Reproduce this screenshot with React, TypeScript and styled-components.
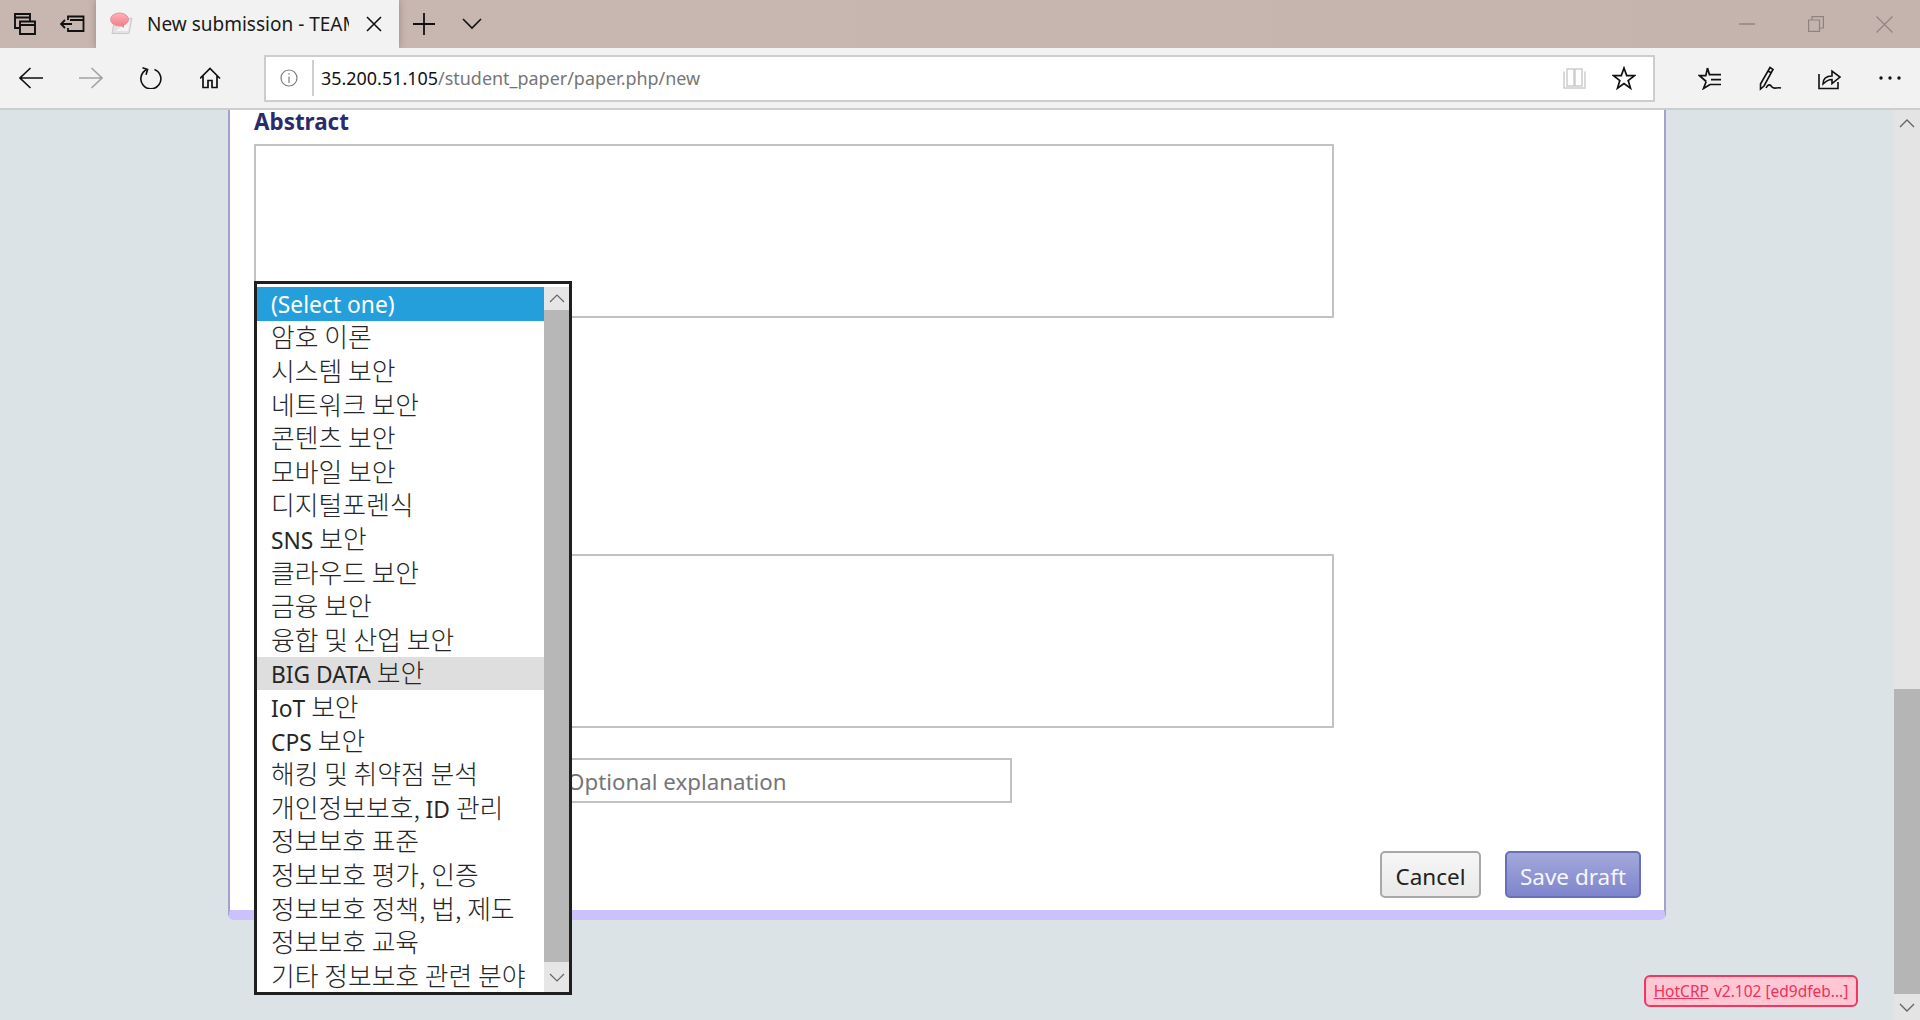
import React from "react";
import styled, { createGlobalStyle } from "styled-components";

const Global = createGlobalStyle`
  html, body { margin: 0; padding: 0; height: 1020px; overflow: hidden; }
  #root { height: 1020px; }
  * { box-sizing: border-box; }
`;
const UI = `"Noto Sans", "Noto Sans CJK KR", "Open Sans", sans-serif`;

const Shell = styled.div`display:flex;flex-direction:column;height:1020px;font-family:${UI};overflow:hidden;`;
const TitleBar = styled.div`display:flex;align-items:stretch;height:48px;background:linear-gradient(90deg,#c8b6b0,#c7b5af 50%,#c5b4ae);padding-left:1px;overflow:hidden;flex:none;`;
const TitleCell = styled.div<{ $w: number }>`width:${p => p.$w}px;display:flex;align-items:center;justify-content:center;flex:none;`;
const Tab = styled.div`width:303px;flex:none;background:#f2f2f2;display:flex;align-items:center;padding-left:14px;box-shadow:0 0 7px rgba(60,40,40,.35);position:relative;`;
const TabTitle = styled.span`width:202px;margin-left:13px;overflow:hidden;white-space:nowrap;font-size:19px;color:#1a1a1a;flex:none;`;
const TabClose = styled.div`margin-left:17px;display:flex;`;
const Spacer = styled.div`flex:1;`;
const WinControls = styled.div`display:flex;padding-right:1px;`;

const ToolBar = styled.div`display:flex;align-items:center;height:62px;background:#f2f2f2;border-bottom:2px solid #cdcdcd;padding-left:1px;flex:none;`;
const NavCell = styled.div`width:60px;flex:none;display:flex;align-items:center;justify-content:center;`;
const AddressBox = styled.div`width:1391px;height:47px;margin:0 25px 0 23px;border:2px solid #cdcdcd;background:#fff;display:flex;align-items:center;flex:none;`;
const InfoCell = styled.div`width:46px;display:flex;justify-content:center;flex:none;`;
const Divider = styled.div`width:2px;height:36px;background:#cfcfcf;flex:none;`;
const Url = styled.div`margin-left:7px;font-size:17.95px;color:#767676;flex:1;white-space:nowrap;`;
const Host = styled.span`color:#111;`;
const BookCell = styled.div`width:49px;display:flex;justify-content:center;`;
const StarCell = styled.div`width:49px;margin-right:5px;display:flex;justify-content:center;`;

const Viewport = styled.div`flex:1;display:flex;min-height:0;`;
const Page = styled.main`flex:1;background:#dce3e7;display:flex;flex-direction:column;min-width:0;`;
const Card = styled.section`position:relative;width:1438px;margin-left:228px;height:810px;background:#fff;border-left:2px solid #a3a2cc;border-right:2px solid #a3a2cc;border-bottom:10px solid #cbc2fb;border-radius:0 0 6px 6px;padding:0 0 0 24px;display:flex;flex-direction:column;flex:none;`;
const Label = styled.h3`margin:0;font-size:22.4px;font-weight:700;line-height:24px;padding-bottom:10px;color:#2a2a6c;`;
const Area = styled.textarea<{ $top: number }>`display:block;width:1080px;height:174px;margin:${p => p.$top}px 0 0;border:2px solid #c2c2c2;background:#fff;resize:none;outline:none;padding:4px;flex:none;`;
const TextField = styled.input`display:block;width:452px;height:45px;margin:30px 0 0 306px;border:2px solid #c2c2c2;padding:2px 5px 0;font:22.3px ${UI};outline:none;flex:none;&::placeholder{color:#767676;opacity:1;}`;
const ButtonRow = styled.div`display:flex;justify-content:flex-end;gap:24px;margin-top:48px;padding-right:23px;`;
const Btn = styled.button<{ $primary?: boolean }>`height:47px;width:${p => (p.$primary ? 136 : 101)}px;border-radius:5px;font:22.5px ${UI};padding:3px 0 0;
  border:2px solid ${p => (p.$primary ? "#6a70b8" : "#a8a8a8")};
  color:${p => (p.$primary ? "#f6f6fd" : "#222")};
  background:${p => (p.$primary ? "linear-gradient(#a3a8da,#7e85cc)" : "linear-gradient(#f6f6f6,#e9e9e9)")};`;
const Badge = styled.div`align-self:flex-end;margin:55px 36px 0 0;height:32px;width:214px;border:2px solid #f4365f;border-radius:6px;background:#ffc6d4;color:#ef3059;font-size:15.5px;display:flex;align-items:center;justify-content:center;white-space:nowrap;`;
const BadgeLink = styled.a`color:#ef3059;text-decoration:underline;margin-right:5px;`;

const Dropdown = styled.div`position:absolute;left:24px;top:171px;width:318px;height:714px;border:3px solid #1f1f1f;background:#fff;padding-top:3px;display:flex;z-index:5;`;
const OptionList = styled.div`flex:1;display:flex;flex-direction:column;`;
const Option = styled.div<{ $selected?: boolean; $hover?: boolean }>`height:33.6px;flex:none;padding:${p => (p.$selected ? "3px" : "0")} 0 0 14px;display:flex;align-items:center;font-size:22.8px;line-height:1;white-space:pre;
  color:${p => (p.$selected ? "#fff" : "#262626")};
  background:${p => (p.$selected ? "#259fdb" : p.$hover ? "#dedede" : "transparent")};`;
const Hangul = styled.span`font-family:"Noto Sans CJK KR",sans-serif;font-size:25.8px;font-weight:300;line-height:1;`;
const ListScroll = styled.div`width:25px;display:flex;flex-direction:column;flex:none;`;
const ListArrow = styled.div<{ $h: number }>`height:${p => p.$h}px;background:#e6e6e6;display:flex;align-items:center;justify-content:center;flex:none;`;
const ListThumb = styled.div`flex:1;background:#b7b7b7;`;

const PageScroll = styled.div`width:26px;flex:none;background:#e4e4e4;display:flex;flex-direction:column;`;
const PageArrow = styled.div`height:26px;display:flex;align-items:center;justify-content:center;flex:none;`;
const PageGap = styled.div`flex:1;`;
const PageThumb = styled.div`height:305px;background:#b5b5b5;flex:none;`;

const Ico: React.FC<{ w: number; h: number; c?: string; sw?: number; children: React.ReactNode }> = ({ w, h, c = "#111", sw = 1.6, children }) => (
  <svg width={w} height={h} viewBox={`0 0 ${w} ${h}`} fill="none" stroke={c} strokeWidth={sw}>{children}</svg>
);

const options = ["(Select one)","암호 이론","시스템 보안","네트워크 보안","콘텐츠 보안","모바일 보안","디지털포렌식","SNS 보안","클라우드 보안","금융 보안","융합 및 산업 보안","BIG DATA 보안","IoT 보안","CPS 보안","해킹 및 취약점 분석","개인정보보호, ID 관리","정보보호 표준","정보보호 평가, 인증","정보보호 정책, 법, 제도","정보보호 교육","기타 정보보호 관련 분야"];

const Label2: React.FC<{ text: string }> = ({ text }) => (
  <span>
    {text.split(/([\uAC00-\uD7A3][\uAC00-\uD7A3 ,]*)/).filter(Boolean).map((part, i) =>
      /[\uAC00-\uD7A3]/.test(part) ? <Hangul key={i}>{part}</Hangul> : <React.Fragment key={i}>{part}</React.Fragment>
    )}
  </span>
);

export default function App() {
  return (
    <Shell>
      <Global />
      <TitleBar>
        <TitleCell $w={47}>
          <Ico w={22} h={22} sw={1.9}><path d="M5.5 15H1V1H16V8.5M1 4.5H16" /><path d="M6 8.5H21V21H6ZM6 12H21" /></Ico>
        </TitleCell>
        <TitleCell $w={48}>
          <Ico w={25} h={18} sw={1.8}><path d="M1 9H12M5 5L1 9L5 13" /><path d="M8 5V1.5H23.5V16H8V13M10 5H23.5" /></Ico>
        </TitleCell>
        <Tab>
          <svg width="24" height="26" viewBox="0 0 24 26">
            <defs><linearGradient id="bub" x1="0" y1="0" x2="0" y2="1"><stop offset="0" stopColor="#fbb3b6" /><stop offset="1" stopColor="#f47f8a" /></linearGradient></defs>
            <path d="M4 11L22 7L19 22.5L2 22.5Z" fill="#e2e2e2" stroke="#c9c9c9" />
            <path d="M6 20L18 20L20 10L17 11Z" fill="#f4f4f4" />
            <ellipse cx="9.5" cy="8.5" rx="9" ry="6.5" fill="url(#bub)" stroke="#ef8e96" />
            <path d="M10 14L14 17L14 13Z" fill="#f47f8a" />
          </svg>
          <TabTitle>New submission - TEAM 4 - HotCRP</TabTitle>
          <TabClose><Ico w={16} h={16}><path d="M1 1L15 15M15 1L1 15" /></Ico></TabClose>
        </Tab>
        <TitleCell $w={50}><Ico w={22} h={22} sw={1.8}><path d="M11 0V22M0 11H22" /></Ico></TitleCell>
        <TitleCell $w={46}><Ico w={20} h={12}><path d="M1 1L10 10L19 1" /></Ico></TitleCell>
        <Spacer />
        <WinControls>
          <TitleCell $w={69}><Ico w={16} h={2} c="#8d8380" sw={1.4}><path d="M0 1H16" /></Ico></TitleCell>
          <TitleCell $w={69}><Ico w={16} h={16} c="#8d8380" sw={1.2}><path d="M.6 4H11.5V15.4H.6ZM4 4V.6H15.4V12H11.5" /></Ico></TitleCell>
          <TitleCell $w={69}><Ico w={17} h={17} c="#8d8380" sw={1.1}><path d="M.5.5L16.5 16.5M16.5.5L.5 16.5" /></Ico></TitleCell>
        </WinControls>
      </TitleBar>
      <ToolBar>
        <NavCell><Ico w={24} h={22}><path d="M1 11H24M11.5 1L1 11L11.5 21" /></Ico></NavCell>
        <NavCell><Ico w={24} h={22} c="#a3a3a3"><path d="M0 11H23M12.5 1L23 11L12.5 21" /></Ico></NavCell>
        <NavCell><Ico w={22} h={22}><path d="M14.5 2.5A10 10 0 1 1 7 2.6" /><path d="M2.5 0.8L7.6 2.6L6 7.8" /></Ico></NavCell>
        <NavCell><Ico w={22} h={22} sw={1.7}><path d="M0 11.5L10 1.5L20 11.5M3 9V20.5H8V13.5H12V20.5H17V9" /></Ico></NavCell>
        <AddressBox>
          <InfoCell><Ico w={18} h={18} c="#7d7d7d" sw={1.2}><circle cx="9" cy="9" r="8" /><path d="M9 7.5V14M9 4.2V5.8" /></Ico></InfoCell>
          <Divider />
          <Url><Host>35.200.51.105</Host>/student_paper/paper.php/new</Url>
          <BookCell><Ico w={23} h={22} c="#cdcdcd" sw={1.5}><path d="M4 2H11V19H4ZM12 19V2H19V19ZM1 4.5V21H22V4.5" /></Ico></BookCell>
          <StarCell><Ico w={24} h={24} sw={1.7}><path d="M12 2L14.7 9.6H22.6L16.2 14.5L18.5 22.2L12 17.5L5.5 22.2L7.8 14.5L1.4 9.6H9.3Z" /></Ico></StarCell>
        </AddressBox>
        <NavCell><Ico w={24} h={24} sw={1.7}><path d="M9.5 2L11.4 8.6H23M8.2 15.5L1.5 9.6H7.8L9.5 2M8.2 15.5L5.5 22.5L12 18.5H23M13 13.6H23" /></Ico></NavCell>
        <NavCell><Ico w={24} h={25} sw={1.6}><path d="M12 1.5L15 3.5L6 20L2.5 23L2.5 18ZM10 5L13.5 7" /><path d="M8 22C10 18 12 18 14 21C16 23.5 19 21 23 22" /></Ico></NavCell>
        <NavCell><Ico w={24} h={24}><path d="M1 8V22.5H20V16" /><path d="M5 18C5 13 8 10 14 10V5L22 11L14 17.5V13.5C10 13.5 8 15 5 18Z" /></Ico></NavCell>
        <NavCell><Ico w={22} h={4} sw={0}><circle cx="2" cy="2" r="1.7" fill="#111" /><circle cx="11" cy="2" r="1.7" fill="#111" /><circle cx="20" cy="2" r="1.7" fill="#111" /></Ico></NavCell>
      </ToolBar>
      <Viewport>
        <Page>
          <Card>
            <Label>Abstract</Label>
            <Area $top={0} />
            <Area $top={236} />
            <TextField placeholder="Optional explanation" readOnly />
            <ButtonRow>
              <Btn>Cancel</Btn>
              <Btn $primary>Save draft</Btn>
            </ButtonRow>
            <Dropdown>
              <OptionList>
                {options.map((o, i) => (
                  <Option key={o} $selected={i === 0} $hover={i === 11}><Label2 text={o} /></Option>
                ))}
              </OptionList>
              <ListScroll>
                <ListArrow $h={23}><Ico w={16} h={9} c="#666" sw={1.2}><path d="M1 8L8 1L15 8" /></Ico></ListArrow>
                <ListThumb />
                <ListArrow $h={30}><Ico w={16} h={9} c="#666" sw={1.2}><path d="M1 1L8 8L15 1" /></Ico></ListArrow>
              </ListScroll>
            </Dropdown>
          </Card>
          <Badge><BadgeLink href="#">HotCRP</BadgeLink> v2.102 [ed9dfeb...]</Badge>
        </Page>
        <PageScroll>
          <PageArrow><Ico w={16} h={9} c="#666" sw={1.4}><path d="M1 8L8 1L15 8" /></Ico></PageArrow>
          <PageGap />
          <PageThumb />
          <PageArrow><Ico w={16} h={9} c="#666" sw={1.4}><path d="M1 1L8 8L15 1" /></Ico></PageArrow>
        </PageScroll>
      </Viewport>
    </Shell>
  );
}
